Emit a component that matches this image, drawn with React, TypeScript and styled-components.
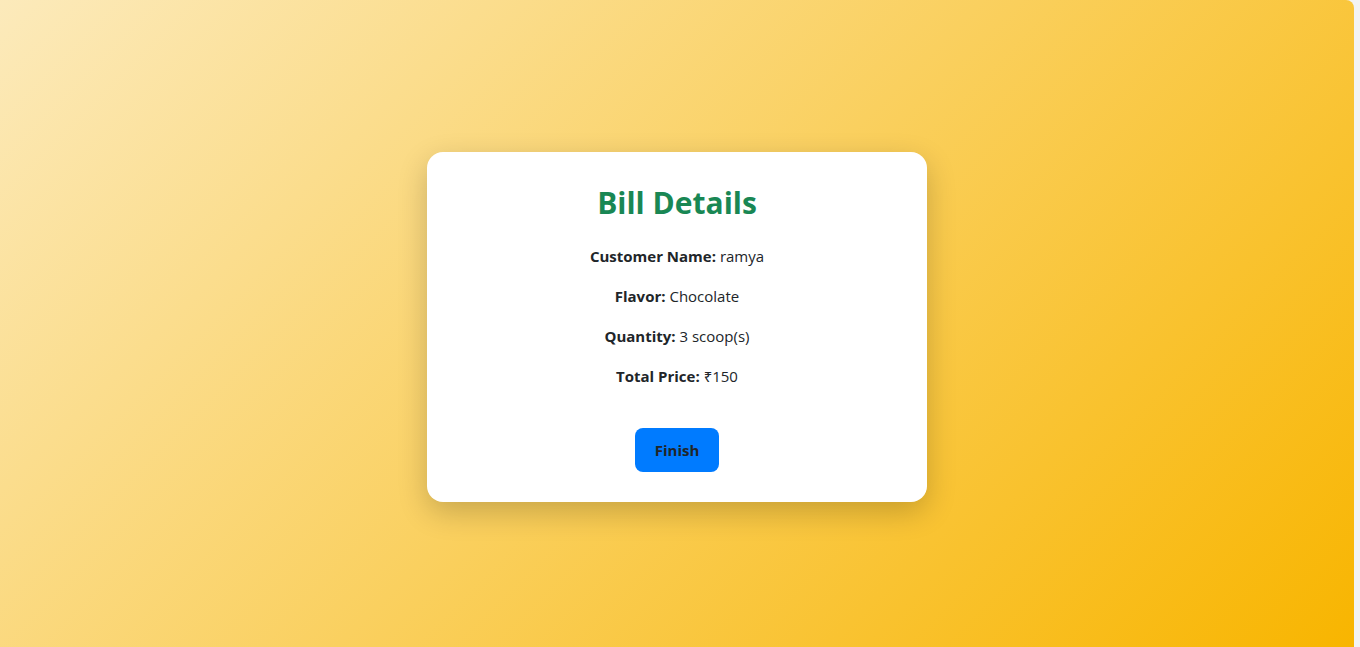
import React from "react";
import styled, { createGlobalStyle } from "styled-components";

const GlobalStyle = createGlobalStyle`
  html, body {
    margin: 0;
    padding: 0;
    background: #f3f3f3;
  }
  body {
    font-family: "Open Sans", "Noto Sans", Arial, sans-serif;
  }
`;

const Page = styled.div`
  width: calc(100% - 6px);
  height: 647px;
  box-sizing: border-box;
  padding-top: 7px;
  border-top-right-radius: 8px;
  background: linear-gradient(135deg, #fceabb 0%, #f8b500 100%);
  display: flex;
  align-items: center;
  justify-content: center;
`;

const Card = styled.div`
  width: 500px;
  box-sizing: border-box;
  padding: 30px 30px;
  background: #ffffff;
  border-radius: 16px;
  box-shadow: 0 10px 30px rgba(0, 0, 0, 0.2);
  display: flex;
  flex-direction: column;
  align-items: center;
  text-align: center;
`;

const Title = styled.h2`
  margin: 0 0 20px;
  font-size: 30px;
  line-height: 42px;
  font-weight: 700;
  color: #198754;
`;

const Rows = styled.div`
  display: flex;
  flex-direction: column;
  gap: 16px;
  margin-bottom: 40px;
`;

const Row = styled.p`
  margin: 0;
  font-size: 15px;
  line-height: 24px;
  color: #212529;
`;

const Label = styled.strong`
  font-weight: 700;
`;

const Button = styled.button`
  height: 44px;
  padding: 0 20px;
  border: none;
  border-radius: 8px;
  background: #007bff;
  color: #212529;
  font-family: inherit;
  font-size: 15px;
  font-weight: 700;
  cursor: pointer;
`;

const rows = [
  ["Customer Name:", "ramya"],
  ["Flavor:", "Chocolate"],
  ["Quantity:", "3 scoop(s)"],
  ["Total Price:", "₹150"],
];

export default function App() {
  return (
    <>
      <GlobalStyle />
      <Page>
        <Card>
          <Title>Bill Details</Title>
          <Rows>
            {rows.map(([label, value]) => (
              <Row key={label}>
                <Label>{label}</Label> {value}
              </Row>
            ))}
          </Rows>
          <Button>Finish</Button>
        </Card>
      </Page>
    </>
  );
}
